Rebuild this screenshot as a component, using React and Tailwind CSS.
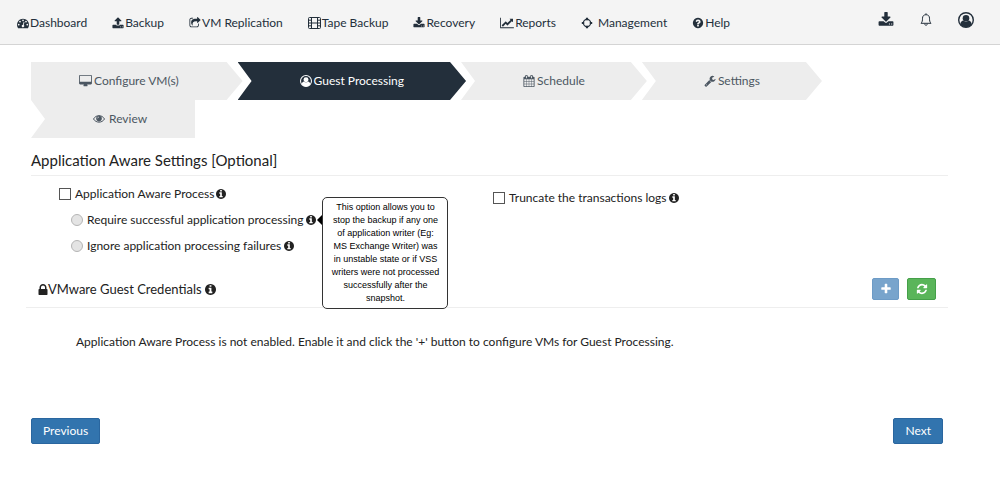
import React from "react";

const CIRCLE =
  "M1664 896q0 209-103 385.5t-279.5 279.5-385.5 103-385.5-103-279.5-279.5-103-385.5 103-385.5 279.5-279.5 385.5-103 385.5 103 279.5 279.5 103 385.5z";

const PATHS = {
  gauge:
    "M384 1152q0-53-37.5-90.5t-90.5-37.5-90.5 37.5-37.5 90.5 37.5 90.5 90.5 37.5 90.5-37.5 37.5-90.5zm192-448q0-53-37.5-90.5t-90.5-37.5-90.5 37.5-37.5 90.5 37.5 90.5 90.5 37.5 90.5-37.5 37.5-90.5zm428 481l101-382q6-26-7.5-48.5t-38.5-29.5-48 6.5-30 39.5l-101 382q-60 5-107 43.5t-63 98.5q-20 77 20 146t117 89 146-20 89-117q16-60-6-117t-72-91zm660-33q0-53-37.5-90.5t-90.5-37.5-90.5 37.5-37.5 90.5 37.5 90.5 90.5 37.5 90.5-37.5 37.5-90.5zm-640-640q0-53-37.5-90.5t-90.5-37.5-90.5 37.5-37.5 90.5 37.5 90.5 90.5 37.5 90.5-37.5 37.5-90.5zm448 192q0-53-37.5-90.5t-90.5-37.5-90.5 37.5-37.5 90.5 37.5 90.5 90.5 37.5 90.5-37.5 37.5-90.5zm320 448q0 261-141 483-19 29-54 29h-1402q-35 0-54-29-141-221-141-483 0-182 71-348t191-286 286-191 348-71 348 71 286 191 191 286 71 348z",
  upload:
    "M1344 1472q0-26-19-45t-45-19-45 19-19 45 19 45 45 19 45-19 19-45zm256 0q0-26-19-45t-45-19-45 19-19 45 19 45 45 19 45-19 19-45zm128-224v320q0 40-28 68t-68 28h-1472q-40 0-68-28t-28-68v-320q0-40 28-68t68-28h427q21 56 70.5 92t110.5 36h256q61 0 110.5-36t70.5-92h427q40 0 68 28t28 68zm-325-648q-17 40-59 40h-256v448q0 26-19 45t-45 19h-256q-26 0-45-19t-19-45v-448h-256q-42 0-59-40-17-39 14-69l448-448q18-19 45-19t45 19l448 448q31 30 14 69z",
  download:
    "M1344 1344q0-26-19-45t-45-19-45 19-19 45 19 45 45 19 45-19 19-45zm256 0q0-26-19-45t-45-19-45 19-19 45 19 45 45 19 45-19 19-45zm128-224v320q0 40-28 68t-68 28h-1472q-40 0-68-28t-28-68v-320q0-40 28-68t68-28h465l135 136q58 56 136 56t136-56l136-136h464q40 0 68 28t28 68zm-325-569q17 41-14 70l-448 448q-18 19-45 19t-45-19l-448-448q-31-29-14-70 17-39 59-39h256v-448q0-26 19-45t45-19h256q26 0 45 19t19 45v448h256q42 0 59 39z",
  share:
    "M1472 989v259q0 119-84.5 203.5t-203.5 84.5h-832q-119 0-203.5-84.5t-84.5-203.5v-832q0-119 84.5-203.5t203.5-84.5h255q13 0 22.5 9.5t9.5 22.5q0 27-26 32-77 26-133 60-10 4-16 4h-112q-66 0-113 47t-47 113v832q0 66 47 113t113 47h832q66 0 113-47t47-113v-214q0-19 18-29 28-13 54-37 16-16 35-8 21 9 21 29zm237-496l-384 384q-18 19-45 19-12 0-25-5-39-17-39-59v-192h-160q-323 0-438 131-119 137-74 473 3 23-20 34-8 2-12 2-16 0-26-13-10-14-21-31t-39.5-68.5-49.5-99.5-38.5-114-17.5-122q0-49 3.5-91t14-90 28-88 47-81.5 68.5-74 94.5-61.5 124.5-48.5 159.5-30.5 196.5-11h160v-192q0-42 39-59 13-5 25-5 26 0 45 19l384 384q19 19 19 45t-19 45z",
  chart:
    "M2048 1536v128h-2048v-1536h128v1408h1920zm-128-1248v435q0 21-19.5 29.5t-35.5-7.5l-121-121-633 633q-10 10-23 10t-23-10l-233-233-416 416-192-192 585-585q10-10 23-10t23 10l233 233 464-464-121-121q-16-16-7.5-35.5t29.5-19.5h435q14 0 23 9t9 23z",
  question:
    "M1024 1376v-192q0-14-9-23t-23-9h-192q-14 0-23 9t-9 23v192q0 14 9 23t23 9h192q14 0 23-9t9-23zm256-672q0-88-55.5-163t-138.5-116-170-41q-243 0-371 213-15 24 8 42l132 100q7 6 19 6 16 0 25-12 53-68 86-92 34-24 86-24 48 0 85.5 26t37.5 59q0 38-20 61t-68 45q-63 28-115.5 86.5t-52.5 125.5v36q0 14 9 23t23 9h192q14 0 23-9t9-23q0-19 21.5-49.5t54.5-49.5q32-18 49-28.5t46-35 44.5-48 28-60.5 12.5-81z" +
    CIRCLE,
  info:
    "M1152 1376v-160q0-14-9-23t-23-9h-96v-512q0-14-9-23t-23-9h-320q-14 0-23 9t-9 23v160q0 14 9 23t23 9h96v320h-96q-14 0-23 9t-9 23v160q0 14 9 23t23 9h448q14 0 23-9t9-23zm-128-896v-160q0-14-9-23t-23-9h-192q-14 0-23 9t-9 23v160q0 14 9 23t23 9h192q14 0 23-9t9-23z" +
    CIRCLE,
  desktop:
    "M1728 992v-832q0-13-9.5-22.5t-22.5-9.5h-1600q-13 0-22.5 9.5t-9.5 22.5v832q0 13 9.5 22.5t22.5 9.5h1600q13 0 22.5-9.5t9.5-22.5zm128-832v1088q0 66-47 113t-113 47h-544q0 37 16 77.5t32 71 16 43.5q0 26-19 45t-45 19h-512q-26 0-45-19t-19-45q0-14 16-44t32-70 16-78h-544q-66 0-113-47t-47-113v-1088q0-66 47-113t113-47h1600q66 0 113 47t47 113z",
  calendar:
    "M192 1664h288v-288h-288v288zm352 0h320v-288h-320v288zm-352-352h288v-320h-288v320zm352 0h320v-320h-320v320zm-352-384h288v-288h-288v288zm736 736h320v-288h-320v288zm-384-736h320v-288h-320v288zm768 736h288v-288h-288v288zm-384-352h320v-320h-320v320zm-352-864v-288q0-13-9.5-22.5t-22.5-9.5h-64q-13 0-22.5 9.5t-9.5 22.5v288q0 13 9.5 22.5t22.5 9.5h64q13 0 22.5-9.5t9.5-22.5zm736 864h288v-320h-288v320zm-384-384h320v-288h-320v288zm384 0h288v-288h-288v288zm32-480v-288q0-13-9.5-22.5t-22.5-9.5h-64q-13 0-22.5 9.5t-9.5 22.5v288q0 13 9.5 22.5t22.5 9.5h64q13 0 22.5-9.5t9.5-22.5zm384-64v1280q0 52-38 90t-90 38h-1408q-52 0-90-38t-38-90v-1280q0-52 38-90t90-38h128v-96q0-66 47-113t113-47h64q66 0 113 47t47 113v96h384v-96q0-66 47-113t113-47h64q66 0 113 47t47 113v96h128q52 0 90 38t38 90z",
  wrench:
    "M448 1472q0-26-19-45t-45-19-45 19-19 45 19 45 45 19 45-19 19-45zm644-420l-682 682q-37 37-90 37-52 0-91-37l-106-108q-38-36-38-90 0-53 38-91l681-681q39 98 114.5 173.5t173.5 114.5zm634-435q0 39-23 106-47 134-164.5 217.5t-258.5 83.5q-185 0-316.5-131.5t-131.5-316.5 131.5-316.5 316.5-131.5q58 0 121.5 16.5t107.5 46.5q16 11 16 28t-16 28l-293 169v224l193 107q5-3 79-48.5t135.5-81 70.5-35.5q15 0 23.5 10t8.5 25z",
  lock: "M640 768h512v-192q0-106-75-181t-181-75-181 75-75 181v192zm832 96v576q0 40-28 68t-68 28h-960q-40 0-68-28t-28-68v-576q0-40 28-68t68-28h32v-192q0-184 132-316t316-132 316 132 132 316v192h32q40 0 68 28t28 68z",
  plus: "M1600 736v192q0 40-28 68t-68 28h-416v416q0 40-28 68t-68 28h-192q-40 0-68-28t-28-68v-416h-416q-40 0-68-28t-28-68v-192q0-40 28-68t68-28h416v-416q0-40 28-68t68-28h192q40 0 68 28t28 68v416h416q40 0 68 28t28 68z",
  refresh:
    "M1639 1056q0 5-1 7-64 268-268 434.5t-478 166.5q-146 0-282.5-55t-243.5-157l-129 129q-19 19-45 19t-45-19-19-45v-448q0-26 19-45t45-19h448q26 0 45 19t19 45-19 45l-137 137q71 66 161 102t187 36q134 0 250-65t186-179q11-17 53-117 8-23 30-23h192q13 0 22.5 9.5t9.5 22.5zm25-800v448q0 26-19 45t-45 19h-448q-26 0-45-19t-19-45 19-45l138-138q-148-137-349-137-134 0-250 65t-186 179q-11 17-53 117-8 23-30 23h-199q-13 0-22.5-9.5t-9.5-22.5v-7q65-268 270-434.5t480-166.5q146 0 284 55.5t245 156.5l130-129q19-19 45-19t45 19 19 45z",
};

function Icon({ name, box = "0 0 1792 1792", className = "size-3" }) {
  return (
    <svg viewBox={box} className={`shrink-0 ${className}`} fill="currentColor" aria-hidden="true">
      <path d={PATHS[name]} />
    </svg>
  );
}

function Film() {
  return (
    <svg viewBox="0 0 13 12" className="h-3 w-[13px] shrink-0" fill="none" stroke="currentColor" aria-hidden="true">
      <rect x="0.5" y="0.5" width="12" height="11" rx="1" />
      <path d="M3.5 0.5v11M9.5 0.5v11M3.5 6h6M0.5 3.2h3M0.5 6h3M0.5 8.8h3M9.5 3.2h3M9.5 6h3M9.5 8.8h3" />
    </svg>
  );
}

function Target() {
  return (
    <svg viewBox="0 0 12 12" className="mr-1 size-3 shrink-0" fill="none" stroke="currentColor" aria-hidden="true">
      <circle cx="6" cy="6" r="3.6" strokeWidth="1.2" />
      <path d="M6 0.8v2.4M6 8.8v2.4M0.8 6h2.4M8.8 6h2.4" strokeWidth="2.2" />
    </svg>
  );
}

function UserCircle({ className }) {
  return (
    <svg viewBox="0 0 16 16" className={`shrink-0 ${className}`} aria-hidden="true">
      <circle cx="8" cy="8" r="7.3" fill="none" stroke="currentColor" strokeWidth="1.4" />
      <circle cx="8" cy="6.2" r="3.3" fill="currentColor" />
      <path
        d="M2.2 12.2C2.7 9.8 4 8.6 5.300 8.600c1.600 1.500 3.800 1.500 5.400 0 1.300 0 2.600 1.200 3.100 3.600A7 7 0 0 1 2.200 12.200z"
        fill="currentColor"
      />
    </svg>
  );
}

function Bell() {
  return (
    <svg viewBox="0 0 12 13" className="h-[13px] w-3" fill="none" stroke="currentColor" aria-hidden="true">
      <path
        d="M6 0.300v1.200M1 10.300C2.300 9 2.500 7.600 2.500 5.200 2.500 3 3.900 1.700 6 1.700s3.500 1.300 3.500 3.500c0 2.400.2 3.800 1.500 5.100z"
        strokeLinejoin="round"
      />
      <path d="M4.700 10.800c.1 1 .6 1.500 1.300 1.500s1.200-.5 1.300-1.500" />
    </svg>
  );
}

function Eye() {
  return (
    <svg viewBox="0 0 12 10" className="mr-[2px] h-[10px] w-3 shrink-0" aria-hidden="true">
      <path d="M0.500 5C3 0.500 9 0.500 11.500 5 9 9.200 3 9.200 0.500 5z" fill="none" stroke="currentColor" />
      <circle cx="6" cy="4.600" r="2.800" fill="currentColor" />
      <path d="M4.600 4.300q.1-1.200 1.300-1.300" fill="none" stroke="#ededed" strokeWidth="0.700" />
    </svg>
  );
}

const NAV = [
  ["Dashboard", <Icon name="gauge" />],
  ["Backup", <Icon name="upload" />],
  ["VM Replication", <Icon name="share" />],
  ["Tape Backup", <Film />],
  ["Recovery", <Icon name="download" />],
  ["Reports", <Icon name="chart" box="0 0 2048 1792" className="h-3 w-[14px]" />],
  ["Management", <Target />],
  ["Help", <Icon name="question" />],
];

const FIRST = "[clip-path:polygon(0_0,calc(100%_-_16px)_0,100%_50%,calc(100%_-_16px)_100%,0_100%)] pl-12 pr-16";
const MIDDLE =
  "[clip-path:polygon(0_0,calc(100%_-_16px)_0,100%_50%,calc(100%_-_16px)_100%,0_100%,14px_50%)] px-[62px]";
const LAST = "[clip-path:polygon(0_0,100%_0,100%_100%,0_100%,14px_50%)] pl-[62px] pr-12";
const IDLE = "bg-[#ededed] text-[#4c5762]";

const STEPS = [
  ["Configure VM(s)", <Icon name="desktop" box="-64 0 1920 1792" className="h-3 w-[13px]" />, FIRST, IDLE],
  ["Guest Processing", <UserCircle className="size-3" />, MIDDLE, "bg-[#232f3b] text-white"],
  ["Schedule", <Icon name="calendar" />, MIDDLE, IDLE],
  ["Settings", <Icon name="wrench" />, MIDDLE, IDLE],
  ["Review", <Eye />, LAST, IDLE],
];

function InfoButton({ label, className = "size-3" }) {
  return (
    <button type="button" aria-label={label} className="flex">
      <Icon name="info" box="128 128 1536 1536" className={className} />
    </button>
  );
}

function Check({ label }) {
  return (
    <div className="flex items-center gap-[2px]">
      <label className="flex items-center gap-1">
        <input type="checkbox" className="size-[12px] appearance-none border border-[#555] bg-white checked:bg-[#555]" />
        {label}
      </label>
      <InfoButton label={`About: ${label}`} className="size-[10px]" />
    </div>
  );
}

function Choice({ label, children }) {
  return (
    <div className="flex items-center gap-[3px]">
      <label className="flex items-center gap-1">
        <input
          type="radio"
          name="processing"
          disabled
          className="size-[12px] appearance-none rounded-full border border-[#b5b5b5] bg-[#e4e4e4]"
        />
        {label}
      </label>
      <div className="relative">
        <InfoButton label={`About: ${label}`} className="size-[10px]" />
        {children}
      </div>
    </div>
  );
}

export default function App() {
  return (
    <div className="bg-white font-['Lato',sans-serif] text-[12px] leading-4 text-[#222]">
      <header className="flex h-[45px] items-center border-b border-[#d4d4d4] bg-[#f4f4f4] pr-[26px] pl-[17px] text-[#232f3b]">
        <nav className="flex grow items-center gap-[25px] pt-[2px]">
          {NAV.map(([label, icon]) => (
            <a key={label} href="#" className="flex items-center gap-px whitespace-nowrap">
              {icon}
              {label}
            </a>
          ))}
        </nav>
        <div className="flex items-center gap-[26px] pb-[5px]">
          <button type="button" aria-label="Downloads">
            <Icon name="download" className="size-4" />
          </button>
          <button type="button" aria-label="Notifications">
            <Bell />
          </button>
          <button type="button" aria-label="Account">
            <UserCircle className="size-4" />
          </button>
        </div>
      </header>

      <main className="pt-[17px] pr-[52px] pl-[31px]">
        <ol className="flex flex-wrap">
          {STEPS.map(([label, icon, shape, tone]) => (
            <li key={label} className={`-mr-[5px] flex h-[38px] items-center gap-[2px] whitespace-nowrap ${shape} ${tone}`}>
              {icon}
              {label}
            </li>
          ))}
        </ol>

        <h2 className="mt-3 border-b border-[#eee] pb-[5px] text-[15px] leading-5">Application Aware Settings [Optional]</h2>

        <div className="flex pt-[10px]">
          <div className="flex w-[434px] flex-col gap-[10px] pl-7">
            <Check label="Application Aware Process" />
            <div className="flex flex-col gap-[10px] pl-3">
              <Choice label="Require successful application processing">
                <div
                  role="tooltip"
                  className="absolute -top-[18px] left-[16px] z-10 w-[126px] rounded-[5px] border border-[#333] bg-white px-[6px] py-[3px] text-center font-['Liberation_Sans',sans-serif] text-[9px] leading-[13px] text-black"
                >
                  <span className="absolute top-[17px] -left-[6px] border-y-[5px] border-r-[5px] border-y-transparent border-r-black" />
                  This option allows you to stop the backup if any one of application writer (Eg: MS Exchange Writer) was in
                  unstable state or if VSS writers were not processed successfully after the snapshot.
                </div>
              </Choice>
              <Choice label="Ignore application processing failures" />
            </div>
          </div>
          <div className="pt-1 pl-7">
            <Check label="Truncate the transactions logs" />
          </div>
        </div>

        <section className="-ml-[5px] mt-6 flex items-center justify-between border-b border-[#eee] pr-3 pb-[7px] pl-3">
          <h2 className="flex items-center text-[13px] leading-5">
            <Icon name="lock" box="256 128 1280 1408" className="h-[11px] w-[10px]" />
            <span className="mr-[3px]">VMware Guest Credentials</span>
            <InfoButton label="About guest credentials" className="size-[11px]" />
          </h2>
          <div className="flex gap-2">
            <button
              type="button"
              disabled
              aria-label="Add credentials"
              className="flex h-[22px] w-[27px] items-center justify-center rounded-[2px] border border-[#6d9bc6] bg-[#78a4cc] text-white"
            >
              <Icon name="plus" />
            </button>
            <button
              type="button"
              aria-label="Refresh"
              className="flex h-[22px] w-[29px] items-center justify-center rounded-[2px] border border-[#45a049] bg-[#5ab55a] text-white"
            >
              <Icon name="refresh" />
            </button>
          </div>
        </section>

        <p className="mt-[26px] pl-[45px]">
          Application Aware Process is not enabled. Enable it and click the '+' button to configure VMs for Guest Processing.
        </p>

        <div className="mt-[68px] flex justify-between pr-[5px] text-white">
          <button type="button" className="h-[26px] rounded-[2px] border border-[#2a669f] bg-[#3274ae] px-[11px]">
            Previous
          </button>
          <button type="button" className="h-[26px] rounded-[2px] border border-[#2a669f] bg-[#3274ae] px-[11px]">
            Next
          </button>
        </div>
      </main>
    </div>
  );
}
